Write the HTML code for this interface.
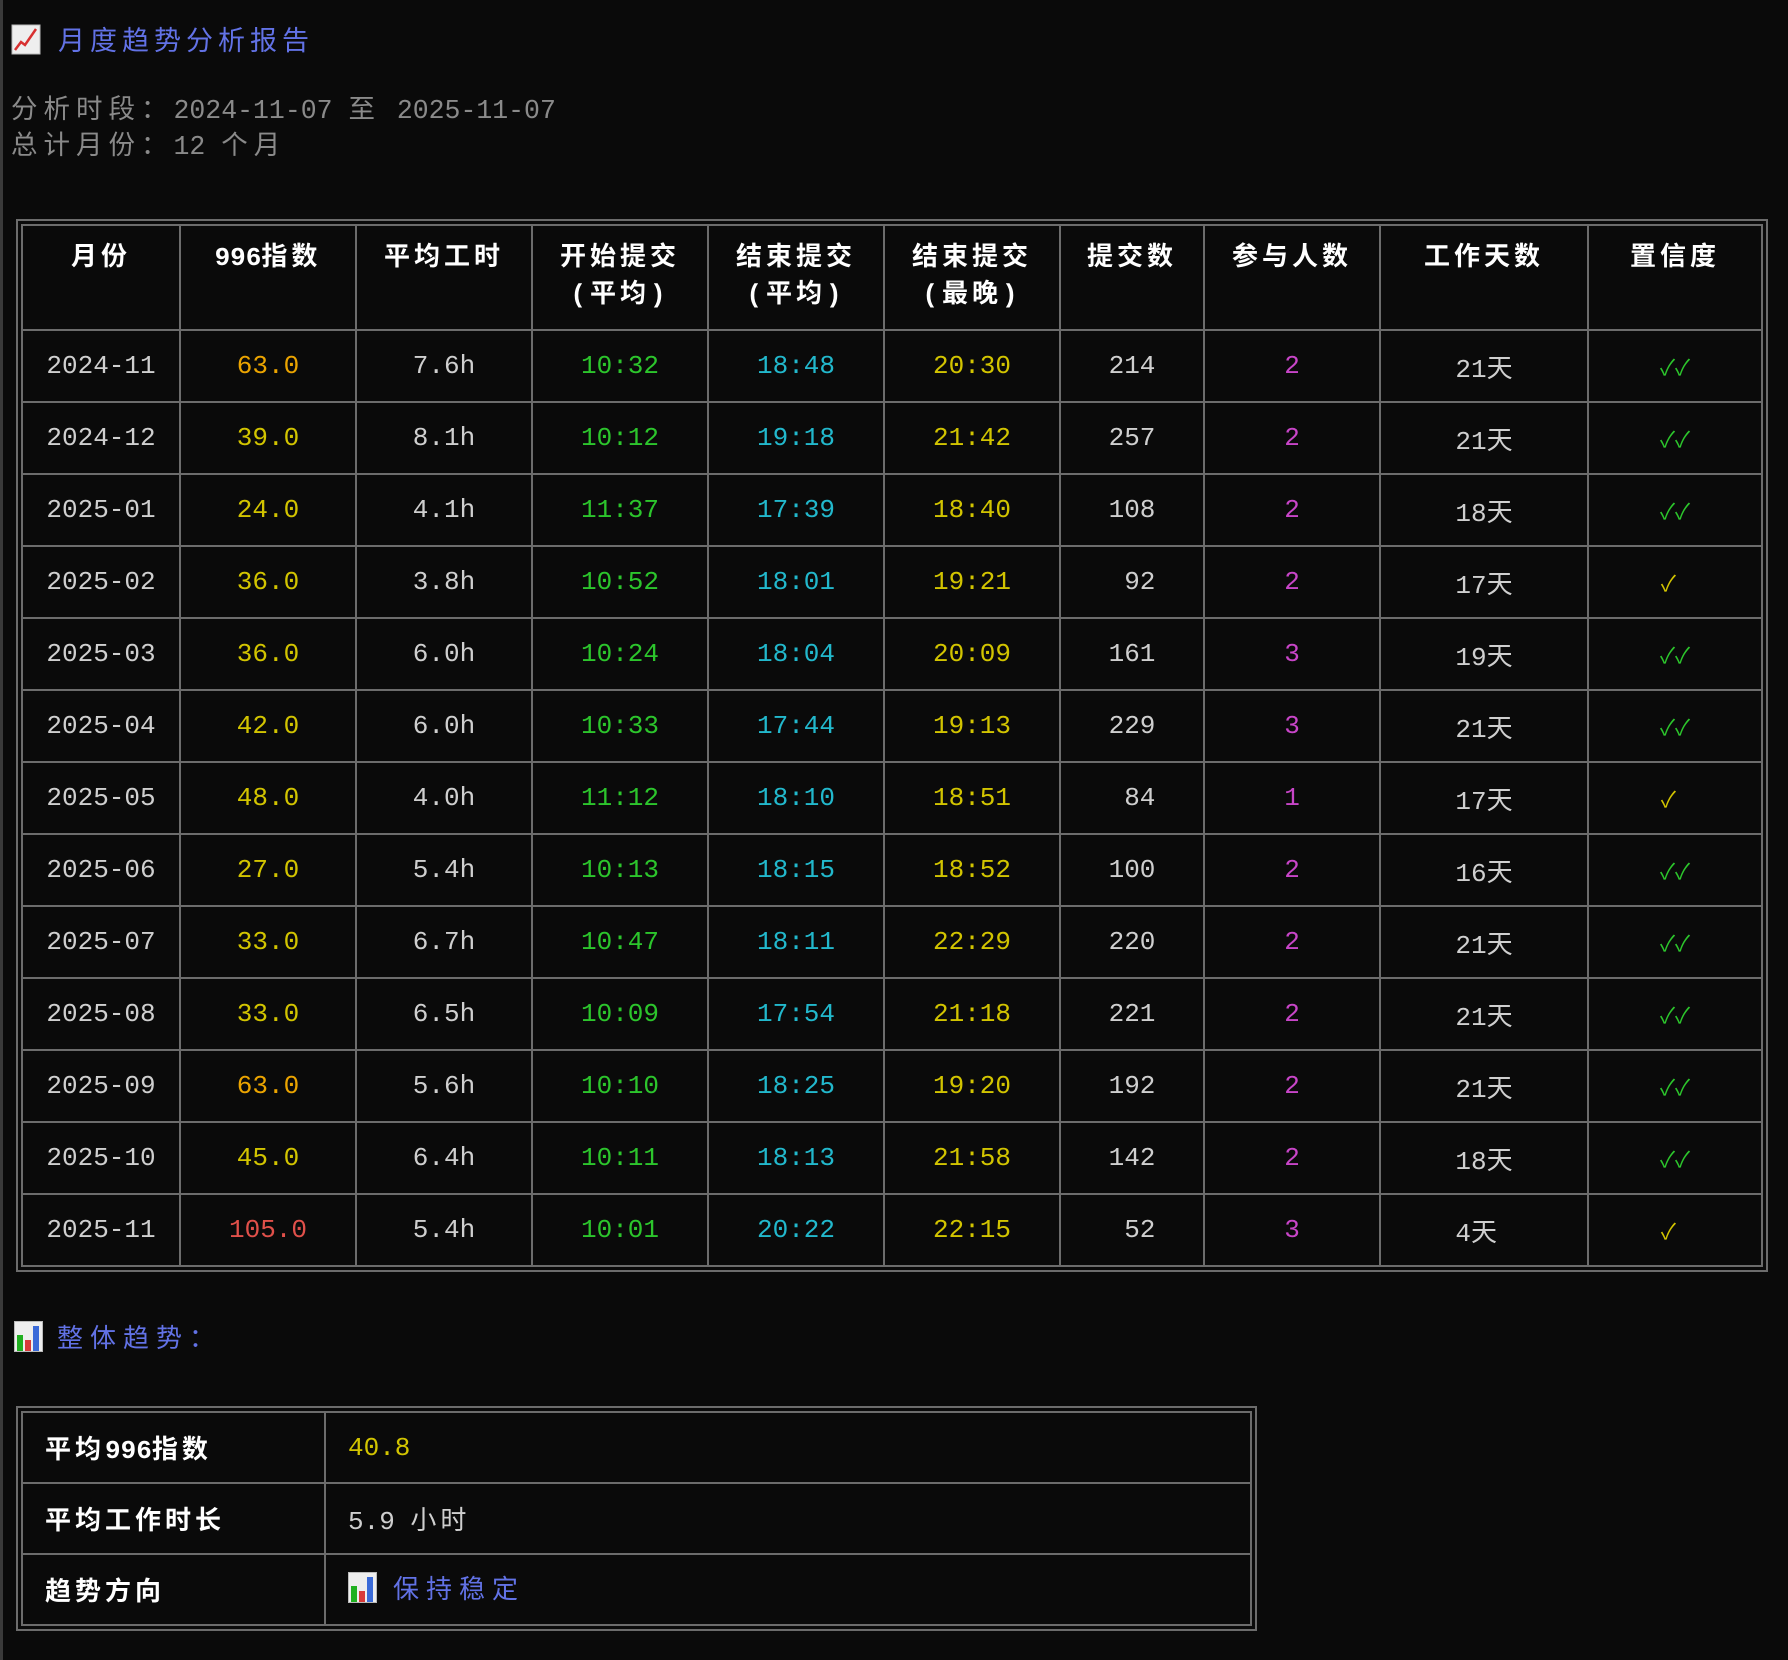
<!DOCTYPE html>
<html><head><meta charset="utf-8"><style>
*{box-sizing:border-box;margin:0;padding:0}
html,body{width:1788px;height:1660px;background:#0a0a0a;overflow:hidden}
body{font-family:"Liberation Mono","Noto Sans CJK SC",monospace;font-size:26px;color:#cfcfcf;position:relative;border-left:3px solid #3a3a3a}
.c{letter-spacing:4px}
.n{letter-spacing:0}
.title{position:absolute;left:8px;top:20px;height:38px;display:flex;align-items:center;color:#6272e6;font-size:27px;letter-spacing:5px}
.title svg{margin-right:17px}
.info{position:absolute;left:8px;top:93px;line-height:36px;color:#8a8a8a;font-size:26.5px}
.info .c{letter-spacing:6px}
.wrap{position:absolute;border:2px solid #6c6c6c;padding:3px}
table{border-collapse:collapse;table-layout:fixed}
td,th{border:2px solid #6c6c6c;text-align:center;white-space:pre;vertical-align:middle}
th{color:#fff;font-weight:bold;vertical-align:top;padding-top:14px;line-height:37px;letter-spacing:4px}
.t1 td{height:72px}
.y{color:#d2c400}.o{color:#eba400}.r{color:#e0504a}.g{color:#2cc52c}.cy{color:#22b8cc}.m{color:#c845c8}
.ok,.oky{font-size:22px;letter-spacing:0}
.ok{color:#2cc52c}.oky{color:#d2c400}
.sec{position:absolute;left:11px;top:1318px;display:flex;align-items:center;color:#6272e6;letter-spacing:7px}
.sec svg{margin-right:14px}
.t2 td{height:71px;text-align:left;padding-left:22px}
.t2 td.l{color:#fff;font-weight:bold;letter-spacing:4px}
</style></head><body>
<div class="title"><svg width="30" height="31" viewBox="0 0 30 31"><rect x="1" y="1" width="28" height="29" fill="#eee" stroke="#bbb"/><polyline points="4,26 10,18 14,21 25,5" fill="none" stroke="#d83030" stroke-width="2.5"/></svg>月度趋势分析报告</div>
<div class="info"><span class="c">分析时段：</span>2024-11-07 <span class="c">至</span> 2025-11-07<br><span class="c">总计月份：</span>12 <span class="c">个月</span></div>
<div class="wrap" style="left:13px;top:219px;width:1752px">
<table class="t1" style="width:1740px">
<colgroup><col style="width:158px"><col style="width:176px"><col style="width:176px"><col style="width:176px"><col style="width:176px"><col style="width:176px"><col style="width:144px"><col style="width:176px"><col style="width:208px"><col style="width:174px"></colgroup>
<tr style="height:105px"><th>月份</th><th><span class="n">996</span>指数</th><th>平均工时</th><th>开始提交<br>(平均)</th><th>结束提交<br>(平均)</th><th>结束提交<br>(最晚)</th><th>提交数</th><th>参与人数</th><th>工作天数</th><th>置信度</th></tr>
<tr><td>2024-11</td><td class="o">63.0</td><td>7.6h</td><td class="g">10:32</td><td class="cy">18:48</td><td class="y">20:30</td><td>214</td><td class="m">2</td><td>21天</td><td class="ok">✓✓</td></tr>
<tr><td>2024-12</td><td class="y">39.0</td><td>8.1h</td><td class="g">10:12</td><td class="cy">19:18</td><td class="y">21:42</td><td>257</td><td class="m">2</td><td>21天</td><td class="ok">✓✓</td></tr>
<tr><td>2025-01</td><td class="y">24.0</td><td>4.1h</td><td class="g">11:37</td><td class="cy">17:39</td><td class="y">18:40</td><td>108</td><td class="m">2</td><td>18天</td><td class="ok">✓✓</td></tr>
<tr><td>2025-02</td><td class="y">36.0</td><td>3.8h</td><td class="g">10:52</td><td class="cy">18:01</td><td class="y">19:21</td><td> 92</td><td class="m">2</td><td>17天</td><td class="oky">✓ </td></tr>
<tr><td>2025-03</td><td class="y">36.0</td><td>6.0h</td><td class="g">10:24</td><td class="cy">18:04</td><td class="y">20:09</td><td>161</td><td class="m">3</td><td>19天</td><td class="ok">✓✓</td></tr>
<tr><td>2025-04</td><td class="y">42.0</td><td>6.0h</td><td class="g">10:33</td><td class="cy">17:44</td><td class="y">19:13</td><td>229</td><td class="m">3</td><td>21天</td><td class="ok">✓✓</td></tr>
<tr><td>2025-05</td><td class="y">48.0</td><td>4.0h</td><td class="g">11:12</td><td class="cy">18:10</td><td class="y">18:51</td><td> 84</td><td class="m">1</td><td>17天</td><td class="oky">✓ </td></tr>
<tr><td>2025-06</td><td class="y">27.0</td><td>5.4h</td><td class="g">10:13</td><td class="cy">18:15</td><td class="y">18:52</td><td>100</td><td class="m">2</td><td>16天</td><td class="ok">✓✓</td></tr>
<tr><td>2025-07</td><td class="y">33.0</td><td>6.7h</td><td class="g">10:47</td><td class="cy">18:11</td><td class="y">22:29</td><td>220</td><td class="m">2</td><td>21天</td><td class="ok">✓✓</td></tr>
<tr><td>2025-08</td><td class="y">33.0</td><td>6.5h</td><td class="g">10:09</td><td class="cy">17:54</td><td class="y">21:18</td><td>221</td><td class="m">2</td><td>21天</td><td class="ok">✓✓</td></tr>
<tr><td>2025-09</td><td class="o">63.0</td><td>5.6h</td><td class="g">10:10</td><td class="cy">18:25</td><td class="y">19:20</td><td>192</td><td class="m">2</td><td>21天</td><td class="ok">✓✓</td></tr>
<tr><td>2025-10</td><td class="y">45.0</td><td>6.4h</td><td class="g">10:11</td><td class="cy">18:13</td><td class="y">21:58</td><td>142</td><td class="m">2</td><td>18天</td><td class="ok">✓✓</td></tr>
<tr><td style="height:69px">2025-11</td><td class="r">105.0</td><td>5.4h</td><td class="g">10:01</td><td class="cy">20:22</td><td class="y">22:15</td><td> 52</td><td class="m">3</td><td>4天 </td><td class="oky">✓ </td></tr>
</table></div>
<div class="sec"><svg width="29" height="31" viewBox="0 0 29 31"><rect x="0.5" y="0.5" width="28" height="30" fill="#eee" stroke="#bbb"/><rect x="3" y="14" width="6" height="16" fill="#20b020"/><rect x="11" y="19" width="6" height="11" fill="#d83a3a"/><rect x="19" y="5" width="6" height="25" fill="#3a6ad8"/></svg>整体趋势：</div>
<div class="wrap" style="left:13px;top:1406px;width:1241px">
<table class="t2" style="width:1229px">
<colgroup><col style="width:303px"><col style="width:926px"></colgroup>
<tr><td class="l">平均<span class="n">996</span>指数</td><td class="y">40.8</td></tr>
<tr><td class="l">平均工作时长</td><td>5.9 <span class="c">小时</span></td></tr>
<tr><td class="l">趋势方向</td><td style="color:#6272e6"><span style="display:inline-flex;align-items:center"><svg width="29" height="31" viewBox="0 0 29 31" style="margin-right:16px"><rect x="0.5" y="0.5" width="28" height="30" fill="#eee" stroke="#bbb"/><rect x="3" y="14" width="6" height="16" fill="#20b020"/><rect x="11" y="19" width="6" height="11" fill="#d83a3a"/><rect x="19" y="5" width="6" height="25" fill="#3a6ad8"/></svg><span style="letter-spacing:7px">保持稳定</span></span></td></tr>
</table></div>
</body></html>
